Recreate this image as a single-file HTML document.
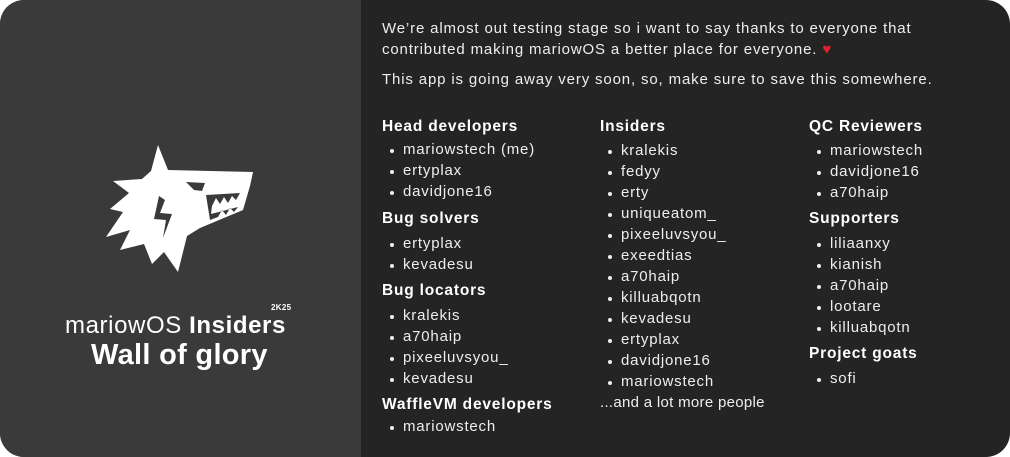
<!DOCTYPE html>
<html><head><meta charset="utf-8"><style>
html,body{margin:0;padding:0;background:#fff;width:1010px;height:457px;overflow:hidden}
.card{position:absolute;left:0;top:0;width:1010px;height:457px;border-radius:24px;overflow:hidden;background:#242424;font-family:"Liberation Sans",sans-serif;color:#eee}
.left{position:absolute;left:0;top:0;width:361px;height:457px;background:#3a3a3a}
.t{position:absolute;white-space:nowrap;line-height:20px;font-size:15px;letter-spacing:0.8px}
.p{letter-spacing:0.85px}
.h{font-weight:bold;font-size:15.5px;color:#fff;letter-spacing:0.8px}
.li{padding-left:21px}
.li:before{content:"";position:absolute;left:8px;top:9px;width:4px;height:4px;border-radius:50%;background:#eee}
</style></head><body><div class="card">
<div class="left">
<svg width="361" height="457" style="position:absolute;left:0;top:0">
<path fill="#fff" d="M158,145 L168,170 L253,172 L250,186 L243,210 L200,228 L187,236 L178,272 L164,252 L152,264 L144,244 L120,250 L130,230 L106,237 L123,212 L110,209 L129,193 L113,181 L142,179 L151,171 Z"/>
<path fill="#3a3a3a" d="M186,182 L205,183 L202,191 L194,190 Z"/>
<path fill="#3a3a3a" d="M206,195 L240,193 L236,200 L232,196 L228,203 L224,197 L220,204 L216,198 L212,206 L211,214 L238,207 L234,212 L230,208 L226,215 L222,210 L218,217 L210,220 Z"/>
<path fill="#3a3a3a" d="M159,196 L165,200 L160,213 L172,214 L163,238 L166,220 L154,219 Z"/>
</svg>
<div class="t" style="left:65px;top:312px;font-size:24px;line-height:28px;color:#fff;letter-spacing:0.6px">mariowOS <b>Insiders</b></div>
<div class="t" style="left:271px;top:303px;font-size:8px;line-height:10px;font-weight:bold;color:#fff;letter-spacing:0.3px">2K25</div>
<div class="t" style="left:91px;top:338px;font-size:29px;line-height:34px;font-weight:bold;color:#fff;letter-spacing:0.3px">Wall of glory</div>
</div>
<div class="t p" style="left:382px;top:19px">We’re almost out testing stage so i want to say thanks to everyone that</div>
<div class="t p" style="left:382px;top:40px">contributed making mariowOS a better place for everyone. <span style="color:#e0202a">♥</span></div>
<div class="t p" style="left:382px;top:70px">This app is going away very soon, so, make sure to save this somewhere.</div>

<div class="t h" style="left:382px;top:117px">Head developers</div>
<div class="t li" style="left:382px;top:140px">mariowstech (me)</div>
<div class="t li" style="left:382px;top:161px">ertyplax</div>
<div class="t li" style="left:382px;top:182px">davidjone16</div>
<div class="t h" style="left:382px;top:209px">Bug solvers</div>
<div class="t li" style="left:382px;top:234px">ertyplax</div>
<div class="t li" style="left:382px;top:255px">kevadesu</div>
<div class="t h" style="left:382px;top:281px">Bug locators</div>
<div class="t li" style="left:382px;top:306px">kralekis</div>
<div class="t li" style="left:382px;top:327px">a70haip</div>
<div class="t li" style="left:382px;top:348px">pixeeluvsyou_</div>
<div class="t li" style="left:382px;top:369px">kevadesu</div>
<div class="t h" style="left:382px;top:395px">WaffleVM developers</div>
<div class="t li" style="left:382px;top:417px">mariowstech</div>

<div class="t h" style="left:600px;top:117px">Insiders</div>
<div class="t li" style="left:600px;top:141px">kralekis</div>
<div class="t li" style="left:600px;top:162px">fedyy</div>
<div class="t li" style="left:600px;top:183px">erty</div>
<div class="t li" style="left:600px;top:204px">uniqueatom_</div>
<div class="t li" style="left:600px;top:225px">pixeeluvsyou_</div>
<div class="t li" style="left:600px;top:246px">exeedtias</div>
<div class="t li" style="left:600px;top:267px">a70haip</div>
<div class="t li" style="left:600px;top:288px">killuabqotn</div>
<div class="t li" style="left:600px;top:309px">kevadesu</div>
<div class="t li" style="left:600px;top:330px">ertyplax</div>
<div class="t li" style="left:600px;top:351px">davidjone16</div>
<div class="t li" style="left:600px;top:372px">mariowstech</div>
<div class="t" style="left:600px;top:393px;letter-spacing:0.3px">...and a lot more people</div>

<div class="t h" style="left:809px;top:117px">QC Reviewers</div>
<div class="t li" style="left:809px;top:141px">mariowstech</div>
<div class="t li" style="left:809px;top:162px">davidjone16</div>
<div class="t li" style="left:809px;top:183px">a70haip</div>
<div class="t h" style="left:809px;top:209px">Supporters</div>
<div class="t li" style="left:809px;top:234px">liliaanxy</div>
<div class="t li" style="left:809px;top:255px">kianish</div>
<div class="t li" style="left:809px;top:276px">a70haip</div>
<div class="t li" style="left:809px;top:297px">lootare</div>
<div class="t li" style="left:809px;top:318px">killuabqotn</div>
<div class="t h" style="left:809px;top:344px">Project goats</div>
<div class="t li" style="left:809px;top:369px">sofi</div>
</div></body></html>
